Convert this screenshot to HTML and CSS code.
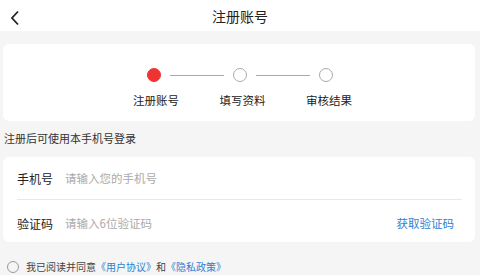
FILE: index.html
```html
<!DOCTYPE html>
<html lang="zh-CN">
<head>
    <meta charset="UTF-8">
    <title>注册账号</title>
    <link rel="stylesheet" href="styles.css">
</head>
<body>
    <div class="header">
        <span class="back">
            <svg width="10" height="16" viewBox="0 0 10 16"><path d="M8 1.5 L2 8 L8 14.5" fill="none" stroke="#222" stroke-width="1.8"/></svg>
        </span>
        <span class="title">注册账号</span>
    </div>

    <div class="steps card">
        <div class="dots">
            <span class="dot active"></span>
            <span class="line"></span>
            <span class="dot"></span>
            <span class="line"></span>
            <span class="dot"></span>
        </div>
        <div class="labels">
            <span>注册账号</span>
            <span>填写资料</span>
            <span>审核结果</span>
        </div>
    </div>

    <div class="tip">注册后可使用本手机号登录</div>

    <div class="form card">
        <div class="row first">
            <label>手机号</label>
            <span class="ph">请输入您的手机号</span>
        </div>
        <div class="row">
            <label>验证码</label>
            <span class="ph">请输入6位验证码</span>
            <a class="code">获取验证码</a>
        </div>
    </div>

    <div class="agree">
        <span class="radio"></span>
        我已阅读并同意<a>《用户协议》</a>和<a>《隐私政策》</a>
    </div>
</body>
</html>
```

FILE: styles.css
```css
body {
    margin: 0;
    background: #f5f5f5;
    font-family: "Noto Sans CJK SC", "Noto Sans", sans-serif;
    color: #333;
    width: 480px;
    height: 275px;
    overflow: hidden;
}
.header {
    height: 31px;
    background: #fff;
    display: flex;
    align-items: center;
    justify-content: center;
    position: relative;
}
.back {
    position: absolute;
    left: 10px;
    top: 7px;
}
.title {
    font-size: 14px;
    color: #222;
}
.card {
    background: #fff;
    border-radius: 6px;
    margin: 0 5px 0 3px;
}
.steps {
    margin-top: 13px;
    height: 76px;
    padding-top: 1px;
}
.dots {
    display: flex;
    align-items: center;
    padding-left: 144px;
    margin-top: 23px;
    height: 14px;
}
.dot {
    border: 1px solid #aaa;
    border-radius: 50%;
    box-sizing: border-box;
    width: 14px;
    height: 14px;
}
.dot.active {
    background: #ee3333;
    border-color: #ee3333;
}
.line {
    width: 54px;
    height: 1px;
    background: #aaa;
    margin: 0 9px;
}
.labels {
    display: flex;
    padding-left: 127px;
    margin-top: 10px;
    font-size: 11.5px;
    color: #222;
}
.labels span {
    width: 52px;
    margin-right: 34.5px;
    text-align: center;
    white-space: nowrap;
}
.tip {
    font-size: 11px;
    color: #333;
    padding: 9px 0 0 4px;
    height: 28px;
    box-sizing: border-box;
}
.form {
    margin-top: 8px;
    padding: 0 13px 0 14px;
    height: 85px;
}
.row {
    display: flex;
    align-items: center;
    height: 42px;
    font-size: 12px;
}
.row.first {
    border-bottom: 1px solid #e8e8e8;
}
.row + .row {
    padding-top: 2px;
}
.row label {
    width: 48px;
    color: #222;
}
.ph {
    color: #aaa;
    font-size: 11.5px;
    flex: 1;
}
.code {
    color: #2f7fd3;
    font-size: 11.5px;
    margin-right: 8px;
}
.agree {
    display: flex;
    align-items: center;
    font-size: 10px;
    color: #444;
    padding: 17px 0 0 7px;
}
.agree a {
    color: #2f7fd3;
}
.radio {
    width: 10px;
    height: 10px;
    border: 1px solid #999;
    border-radius: 50%;
    margin-right: 7px;
}
```
